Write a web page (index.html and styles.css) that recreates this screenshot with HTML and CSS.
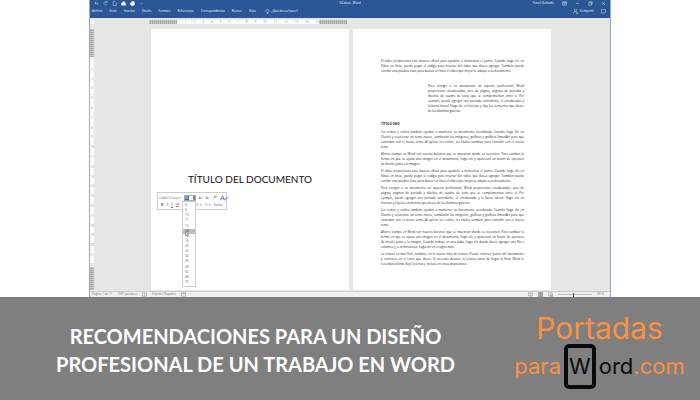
FILE: index.html
```html
<!DOCTYPE html>
<html lang="es">
<head>
  <meta charset="UTF-8" />
  <meta name="viewport" content="width=device-width, initial-scale=1.0" />
  <title>Recomendaciones para un diseño profesional de un trabajo en Word</title>
  <link rel="stylesheet" href="styles.css">
</head>
<body>
  <main class="word-window">
    <header class="app-header">
      <div class="title-bar">
        <div class="quick-access">
          <button aria-label="Deshacer"><svg viewBox="0 0 12 12"><path d="M2 5h6a3 3 0 0 1 0 5M5 2 2 5l3 3"/></svg></button>
          <button aria-label="Rehacer"><svg viewBox="0 0 12 12"><path d="M9 3a4 4 0 1 0 1 4M6 3h4V0"/></svg></button>
          <button aria-label="Nuevo"><svg viewBox="0 0 12 12"><path d="M3 1h4l3 3v7H3z"/></svg></button>
          <button aria-label="Abrir"><svg viewBox="0 0 12 12"><path class="solid" d="M1 5h10v5H1zM4 2h5v3H4z"/></svg></button>
          <button aria-label="Imprimir"><svg viewBox="0 0 12 12"><path class="solid" d="M1 5h10v4H1zM4 1h6v4H4zM3 9h5v2H3z"/></svg></button>
          <button aria-label="Personalizar"><svg viewBox="0 0 12 12"><path d="M4 5l2 2 2-2"/></svg></button>
        </div>
        <span class="file-name">02.docx - Word</span>
        <div class="window-controls">
          <span>Yoneli Gallardo</span>
          <button aria-label="Opciones de cinta"><svg viewBox="0 0 12 12"><path d="M1 2h10v8H1zM1 4h10M6 9V6M4 7l2-2 2 2"/></svg></button>
          <button aria-label="Minimizar"><svg viewBox="0 0 12 12"><path d="M2 6h8"/></svg></button>
          <button aria-label="Restaurar"><svg viewBox="0 0 12 12"><path d="M2 4h6v6H2zM4 4V2h6v6H8"/></svg></button>
          <button aria-label="Cerrar"><svg viewBox="0 0 12 12"><path d="M2 2l8 8M10 2l-8 8"/></svg></button>
        </div>
      </div>
      <nav class="tabs">
        <button>Archivo</button>
        <button>Inicio</button>
        <button>Insertar</button>
        <button>Diseño</button>
        <button>Formato</button>
        <button>Referencias</button>
        <button>Correspondencia</button>
        <button>Revisar</button>
        <button>Vista</button>
        <button class="tell-me"><svg viewBox="0 0 12 12"><path d="M4 8C1 5 3 1 6 1s5 4 2 7zM4 10h4M5 12h2"/></svg>¿Qué desea hacer?</button>
        <button class="share"><svg viewBox="0 0 12 12"><path d="M3 3a3 3 0 1 1 6 0 3 3 0 0 1-6 0M1 11c0-6 8-6 8-2M8 10h4M10 8v4"/></svg>Compartir</button>
        <button aria-label="Comentarios"><svg viewBox="0 0 12 12"><path d="M1 1h10v8H6l-2 2V9H1z"/></svg></button>
      </nav>
    </header>

    <div class="ruler-row">
      <span class="tab-stop">⌞</span>
      <div class="ruler-track">
        <div class="ruler">
          <div class="ruler-margin"></div>
          <div class="ruler-body">
            <span>·</span><span>1</span><span>2</span><span>3</span><span>4</span><span>5</span><span>6</span><span>7</span><span>8</span><span>9</span><span>10</span><span>11</span><span>12</span><span>13</span><span>14</span><span>15</span>
          </div>
          <div class="ruler-margin"></div>
        </div>
      </div>
    </div>

    <div class="workspace">
      <div class="side-ruler">
        <div class="side-margin"></div>
        <div class="side-body">
          <span>1</span><span>2</span><span>3</span><span>4</span><span>5</span><span>6</span><span>7</span><span>8</span><span>9</span><span>10</span><span>11</span><span>12</span><span>13</span><span>14</span><span>15</span><span>16</span><span>17</span><span>18</span><span>19</span><span>20</span><span>21</span><span>22</span>
        </div>
        <div class="side-margin side-margin-end"></div>
      </div>
      <div class="pages">
        <section class="page cover">
          <h1>TÍTULO DEL DOCUMENTO</h1>
          <div class="mini-toolbar">
            <div class="tool-row">
              <button class="font-name">Calibri (Cuerp ▾</button>
              <span class="size-field"><input type="text" value="36" aria-label="Tamaño de fuente"><button aria-label="Ver tamaños">▾</button></span>
              <button>A˄</button>
              <button>A˅</button>
              <button aria-label="Copiar formato"><svg viewBox="0 0 12 12"><path d="M2 10l5-5M5 3l4 4 2-5z"/></svg></button>
              <button class="styles-icon" aria-label="Estilos"><svg viewBox="0 0 24 14"><path d="M1 13 7 1l5 12M3 9h8M12 12 22 5"/></svg></button>
            </div>
            <div class="tool-row">
              <button class="bold">N</button>
              <button class="italic">K</button>
              <button class="underline">S</button>
              <button class="highlight">ab</button>
              <button class="list-button">☰ ▾</button>
              <button>☰ ▾</button>
              <button>Estilos</button>
            </div>
            <ul class="size-list" role="listbox" aria-label="Tamaños">
              <li role="option">8</li>
              <li role="option">9</li>
              <li role="option">10</li>
              <li role="option">11</li>
              <li role="option">12</li>
              <li role="option" class="active" aria-selected="true">14</li>
              <li role="option">16</li>
              <li role="option">18</li>
              <li role="option">20</li>
              <li role="option">22</li>
              <li role="option">24</li>
              <li role="option">26</li>
              <li role="option">28</li>
              <li role="option">36</li>
              <li role="option">48</li>
              <li role="option">72</li>
            </ul>
            <svg class="pointer" viewBox="0 0 10 14"><path d="M1 1v10l3-2 2 4 2-1-2-4h3z"/></svg>
          </div>
        </section>

        <article class="page body-page">
          <p>
            <span>El vídeo proporciona una manera eficaz para ayudarle a demostrar el punto. Cuando haga clic en</span>
            <span>Vídeo en línea, puede pegar el código para insertar del vídeo que desea agregar. También puede</span>
            <span>escribir una palabra clave para buscar en línea el vídeo que mejor se adapte a su documento.</span>
          </p>
          <p class="indented">
            <span>Para otorgar a su documento un aspecto profesional, Word</span>
            <span>proporciona encabezados, pies de página, páginas de portada y</span>
            <span>diseños de cuadro de texto que se complementan entre sí. Por</span>
            <span>ejemplo, puede agregar una portada coincidente, el encabezado y</span>
            <span>la barra lateral. Haga clic en Insertar y elija los elementos que desee</span>
            <span>de las distintas galerías.</span>
          </p>
          <h2>TÍTULO UNO</h2>
          <p>
            <span>Los temas y estilos también ayudan a mantener su documento coordinado. Cuando haga clic en</span>
            <span>Diseño y seleccione un tema nuevo, cambiarán las imágenes, gráficos y gráficos SmartArt para que</span>
            <span>coincidan con el nuevo tema. Al aplicar los estilos, los títulos cambian para coincidir con el nuevo</span>
            <span>tema.</span>
          </p>
          <p>
            <span>Ahorre tiempo en Word con nuevos botones que se muestran donde se necesiten. Para cambiar la</span>
            <span>forma en que se ajusta una imagen en el documento, haga clic y aparecerá un botón de opciones</span>
            <span>de diseño junto a la imagen.</span>
          </p>
          <p>
            <span>El vídeo proporciona una manera eficaz para ayudarle a demostrar el punto. Cuando haga clic en</span>
            <span>Vídeo en línea, puede pegar el código para insertar del vídeo que desea agregar. También puede</span>
            <span>escribir una palabra clave para buscar en línea el vídeo que mejor se adapte a su documento.</span>
          </p>
          <p>
            <span>Para otorgar a su documento un aspecto profesional, Word proporciona encabezados, pies de</span>
            <span>página, páginas de portada y diseños de cuadro de texto que se complementan entre sí. Por</span>
            <span>ejemplo, puede agregar una portada coincidente, el encabezado y la barra lateral. Haga clic en</span>
            <span>Insertar y elija los elementos que desee de las distintas galerías.</span>
          </p>
          <p>
            <span>Los temas y estilos también ayudan a mantener su documento coordinado. Cuando haga clic en</span>
            <span>Diseño y seleccione un tema nuevo, cambiarán las imágenes, gráficos y gráficos SmartArt para que</span>
            <span>coincidan con el nuevo tema. Al aplicar los estilos, los títulos cambian para coincidir con el nuevo</span>
            <span>tema.</span>
          </p>
          <p>
            <span>Ahorre tiempo en Word con nuevos botones que se muestran donde se necesiten. Para cambiar la</span>
            <span>forma en que se ajusta una imagen en el documento, haga clic y aparecerá un botón de opciones</span>
            <span>de diseño junto a la imagen. Cuando trabaje en una tabla, haga clic donde desee agregar una fila o</span>
            <span>columna y, a continuación, haga clic en el signo más.</span>
          </p>
          <p>
            <span>La lectura es más fácil, también, en la nueva vista de lectura. Puede contraer partes del documento</span>
            <span>y centrarse en el texto que desee. Si necesita detener la lectura antes de llegar al final, Word le</span>
            <span>recordará dónde dejó la lectura, incluso en otros dispositivos.</span>
          </p>
        </article>
      </div>
    </div>

    <footer class="status-bar">
      <span>Página 1 de 11</span>
      <span>1097 palabras</span>
      <svg viewBox="0 0 12 12"><path d="M1 2h10v8H1zM6 2v8"/></svg>
      <span>Español (España)</span>
      <svg viewBox="0 0 12 12"><path d="M1 2h10v8H1zM1 4h10"/></svg>
      <div class="view-controls">
        <button aria-label="Modo de lectura"><svg viewBox="0 0 12 12"><path d="M1 2h10v7H1zM6 2v9"/></svg></button>
        <button class="current" aria-label="Diseño de impresión"><svg viewBox="0 0 12 12"><path d="M2 1h8v10H2zM4 4h4M4 6h4M4 8h4"/></svg></button>
        <button aria-label="Diseño web"><svg viewBox="0 0 12 12"><path d="M1 2h9v7H1zM6 6h5v5H6z"/></svg></button>
        <input type="range" class="zoom" aria-label="Zoom" value="45">
        <span>90 %</span>
      </div>
    </footer>
  </main>

  <section class="banner">
    <h2 class="headline">RECOMENDACIONES PARA UN DISEÑO<br>PROFESIONAL DE UN TRABAJO EN WORD</h2>
    <div class="brand">
      <div class="brand-top">Portadas</div>
      <div class="brand-bottom">
        <span>para</span>
        <span class="brand-box">W</span>
        <span><span class="dark">ord</span>.com</span>
      </div>
    </div>
  </section>
</body>
</html>
```

FILE: styles.css
```css
* {
  box-sizing: border-box;
}
body {
  min-height: 100vh;
  margin: 0;
  display: flex;
  flex-direction: column;
  background: #fff;
  font-family: Lato, 'Open Sans', sans-serif;
}
button, input {
  font: inherit;
  color: inherit;
  background: none;
  border: none;
  padding: 0;
  margin: 0;
}
button {
  display: flex;
  align-items: center;
  gap: 2px;
  white-space: nowrap;
}
svg {
  display: block;
  width: 5px;
  height: 5px;
  flex: none;
  fill: none;
  stroke: currentColor;
  stroke-width: 1;
}
.solid {
  fill: currentColor;
}

/* Word window */
.word-window {
  width: 100%;
  max-width: 522px;
  margin: 0 auto;
  background: #e6e6e6;
  border-left: 1px solid #8fa9cf;
  border-right: 1px solid #8fa9cf;
  font-family: 'Open Sans', sans-serif;
  font-size: 3px;
}
.app-header {
  background: #2b5797;
  color: #fff;
  line-height: 5px;
  padding-bottom: 3px;
}
.title-bar {
  display: grid;
  grid-template-columns: 1fr auto 1fr;
  align-items: center;
  height: 6px;
  padding: 0 4px;
}
.quick-access {
  display: flex;
  gap: 4px;
}
.window-controls {
  display: flex;
  justify-content: flex-end;
  align-items: center;
  gap: 8px;
}
.tabs {
  display: flex;
  align-items: center;
  gap: 7px;
  height: 11px;
  margin-bottom: -2px;
  padding: 0 4px 0 2px;
}
.tell-me {
  margin-left: 2px;
}
.share {
  margin-left: auto;
}

.ruler-row {
  display: flex;
  align-items: center;
  height: 7px;
  color: #888;
}
.tab-stop {
  width: 4px;
  height: 4px;
  line-height: 4px;
  background: #fff;
}
.ruler-track {
  flex: 1;
  display: flex;
  justify-content: center;
  padding-right: 208px;
}
.ruler {
  display: flex;
  width: 198px;
  height: 4px;
}
.ruler-margin {
  width: 28px;
  background: repeating-linear-gradient(90deg, #c6c6c6 0 1px, #aaa 1px 2px);
}
.ruler-body {
  flex: 1;
  display: flex;
  justify-content: space-between;
  background: #fff;
  line-height: 4px;
}

.workspace {
  display: flex;
  padding: 4px 0 1px;
}
.side-ruler {
  display: flex;
  flex-direction: column;
  width: 4px;
  color: #888;
}
.side-margin {
  height: 28px;
  background: repeating-linear-gradient(#c6c6c6 0 1px, #aaa 1px 2px);
}
.side-margin-end {
  height: 23px;
}
.side-body {
  flex: 1;
  display: flex;
  flex-direction: column;
  justify-content: space-between;
  align-items: center;
  background: #fff;
  line-height: 4px;
}
.pages {
  flex: 1;
  display: flex;
  justify-content: center;
  gap: 4px;
  padding-right: 2px;
}
.page {
  width: 198px;
  min-height: 261px;
  background: #fff;
  color: #222;
}
.cover {
  position: relative;
}
.cover h1 {
  margin: 142px 0 0;
  font-family: Lato, sans-serif;
  font-size: 10px;
  line-height: 16px;
  font-weight: 400;
  text-align: center;
  color: #111;
}
.body-page {
  padding: 30px 27px 0 28px;
  line-height: 5px;
}
.body-page p {
  margin: 0 0 2px;
}
.body-page p span {
  display: block;
  white-space: nowrap;
  text-align-last: justify;
}
.body-page p span:last-child {
  text-align-last: left;
}
.body-page .indented {
  margin: 10px 0 8px;
  padding-left: 47px;
}
.body-page h2 {
  margin: 0 0 3px;
  font-size: 3px;
  line-height: 5px;
}

/* Floating toolbar with the open size list */
.mini-toolbar {
  position: absolute;
  left: 6px;
  top: 163px;
  width: 70px;
  padding: 1px;
  background: #fff;
  border: 1px solid #ccc;
  color: #555;
}
.tool-row {
  display: flex;
  align-items: center;
  gap: 3px;
  height: 7px;
}
.tool-row + .tool-row {
  padding-left: 2px;
}
.font-name {
  width: 22px;
}
.size-field {
  display: flex;
  width: 13px;
  height: 6px;
  border: 1px solid #aaa;
}
.size-field input {
  width: 8px;
  background: linear-gradient(90deg, #3a6db5 4px, #fff 4px);
  color: #fff;
}
.size-field button {
  flex: 1;
  background: #888;
}
.styles-icon {
  color: #2f6cb3;
}
.styles-icon svg {
  width: 9px;
  height: 6px;
  stroke-width: 2;
}
.bold {
  font-weight: 700;
}
.italic {
  font-style: italic;
}
.underline {
  text-decoration: underline;
}
.highlight {
  border-bottom: 1px solid #ed7d31;
}
.list-button {
  margin-left: 14px;
}
.size-list {
  position: absolute;
  left: 24px;
  top: 8px;
  width: 14px;
  min-height: 86px;
  margin: 0;
  padding: 1px 0;
  display: flex;
  flex-direction: column;
  justify-content: space-between;
  list-style: none;
  background: #fff;
  border: 1px solid #ccc;
  line-height: 5px;
}
.size-list li {
  padding-left: 2px;
}
.size-list .active {
  background: #bdbdbd;
  color: #222;
}
.pointer {
  position: absolute;
  left: 27px;
  top: 38px;
  width: 4px;
  height: 6px;
  fill: #fff;
  stroke: #333;
}

.status-bar {
  display: flex;
  align-items: center;
  gap: 5px;
  height: 6px;
  padding: 0 6px 0 2px;
  background: #f0f0f0;
  border-top: 1px solid #ccc;
  color: #777;
  line-height: 5px;
}
.view-controls {
  display: flex;
  align-items: center;
  gap: 5px;
  margin-left: auto;
}
.current {
  background: #bbb;
}
.zoom {
  appearance: none;
  width: 34px;
  height: 5px;
  background: linear-gradient(#bbb, #bbb) center / 100% 1px no-repeat;
}
.zoom::-webkit-slider-thumb {
  appearance: none;
  width: 1px;
  height: 4px;
  background: #444;
}

/* Banner */
.banner {
  flex: 1;
  display: grid;
  grid-template-columns: 73% 27%;
  align-items: center;
  background: #7f7f7f;
}
.headline {
  margin: 2px 0 0;
  font-size: 20px;
  line-height: 28px;
  font-weight: 700;
  text-align: center;
  color: #fff;
}
.brand {
  display: flex;
  flex-direction: column;
  align-items: center;
  padding: 4px 12px 0 0;
  font-family: Inter, 'Open Sans', sans-serif;
  color: #fb9145;
}
.brand-top {
  font-size: 30px;
  line-height: 32px;
}
.brand-bottom {
  display: flex;
  align-items: center;
  gap: 3px;
  font-size: 22px;
  line-height: 25px;
}
.brand-box {
  padding: 6px 1px;
  border: 4px solid #0a0c10;
  border-radius: 5px;
  color: #0a0c10;
}
.dark {
  color: #0a0c10;
}
```
